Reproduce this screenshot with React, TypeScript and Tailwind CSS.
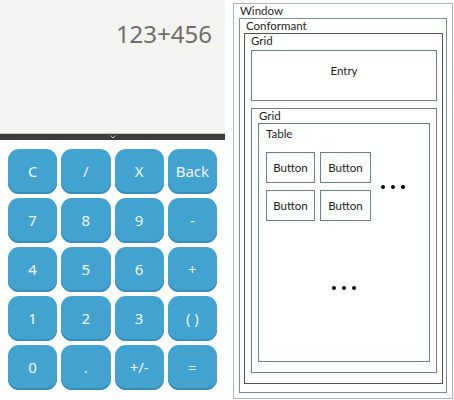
const keys = [
  "C", "/", "X", "Back",
  "7", "8", "9", "-",
  "4", "5", "6", "+",
  "1", "2", "3", "( )",
  "0", ".", "+/-", "=",
];

function Dots() {
  return (
    <div className="flex items-center gap-[6px]">
      <span className="w-[4px] h-[4px] rounded-full bg-black" />
      <span className="w-[4px] h-[4px] rounded-full bg-black" />
      <span className="w-[4px] h-[4px] rounded-full bg-black" />
    </div>
  );
}

function WidgetButton({ wide }: { wide?: boolean }) {
  return (
    <div
      className={
        (wide ? "w-[51px]" : "w-[49px]") +
        " h-[31px] border border-[#6b7b90] flex items-center justify-center text-[#222]"
      }
    >
      Button
    </div>
  );
}

function Calculator() {
  return (
    <div
      className="w-[225px] h-[400px] flex flex-col bg-white"
      style={{ fontFamily: '"Noto Sans", "Open Sans", sans-serif' }}
    >
      <div className="h-[133px] bg-[#f3f3f1] flex justify-end pr-[13px] pt-[18px]">
        <span className="text-[24px] leading-[32px] text-[#6e6e6e]">123+456</span>
      </div>
      <div className="h-[1px] bg-[#c4c4c4]" />
      <div className="h-[6px] bg-[#3c3c3c] flex items-center justify-center">
        <svg width="6" height="4" viewBox="0 0 6 4">
          <path d="M0.5 0.5 L3 3 L5.5 0.5" stroke="#c8c8c8" strokeWidth="1" fill="none" />
        </svg>
      </div>
      <div className="px-[8px] pt-[9px] grid grid-cols-4 gap-[4px]">
        {keys.map((k) => (
          <div
            key={k}
            className="h-[45px] rounded-[11px] bg-[#43a3d0] shadow-[inset_0_-2px_0_#378fba] flex items-center justify-center text-[15px] text-[#f2f6f8]"
          >
            {k}
          </div>
        ))}
      </div>
    </div>
  );
}

function Structure() {
  return (
    <div
      className="ml-[8px] mt-[3px] w-[220px] h-[396px] border border-[#aab4c2] flex flex-col text-[11.5px] text-[#1e1e1e]"
      style={{ fontFamily: 'Lato, "Noto Sans", sans-serif' }}
    >
      <div className="h-[14px] leading-[14px] pl-[6px]">Window</div>
      <div className="ml-[5px] w-[208px] h-[375px] border border-[#7e8ca0] flex flex-col">
        <div className="h-[14px] leading-[14px] pl-[6px]">Conformant</div>
        <div className="ml-[4px] w-[199px] h-[351px] border border-[#555] flex flex-col">
          <div className="h-[16px] leading-[14px] pl-[6px]">Grid</div>
          <div className="ml-[6px] w-[186px] h-[51px] border border-[#6b7b90] pt-[13px] text-center leading-[14px]">
            Entry
          </div>
          <div className="ml-[6px] mt-[7px] w-[186px] h-[265px] border border-[#6b7b90] flex flex-col">
            <div className="h-[14px] leading-[14px] pl-[7px]">Grid</div>
            <div className="ml-[6px] w-[172px] h-[239px] border border-[#6b7b90] flex flex-col">
              <div className="h-[28px] pt-[3px] leading-[14px] pl-[7px]">Table</div>
              <div className="ml-[7px] flex items-center">
                <div className="flex flex-col gap-[7px]">
                  <div className="flex gap-[5px]">
                    <WidgetButton />
                    <WidgetButton wide />
                  </div>
                  <div className="flex gap-[5px]">
                    <WidgetButton />
                    <WidgetButton wide />
                  </div>
                </div>
                <div className="ml-[10px]">
                  <Dots />
                </div>
              </div>
              <div className="flex-1 flex items-center justify-center pb-[6px]">
                <Dots />
              </div>
            </div>
          </div>
        </div>
      </div>
    </div>
  );
}

export default function App() {
  return (
    <div className="w-[454px] h-[400px] flex bg-white overflow-hidden">
      <Calculator />
      <Structure />
    </div>
  );
}
